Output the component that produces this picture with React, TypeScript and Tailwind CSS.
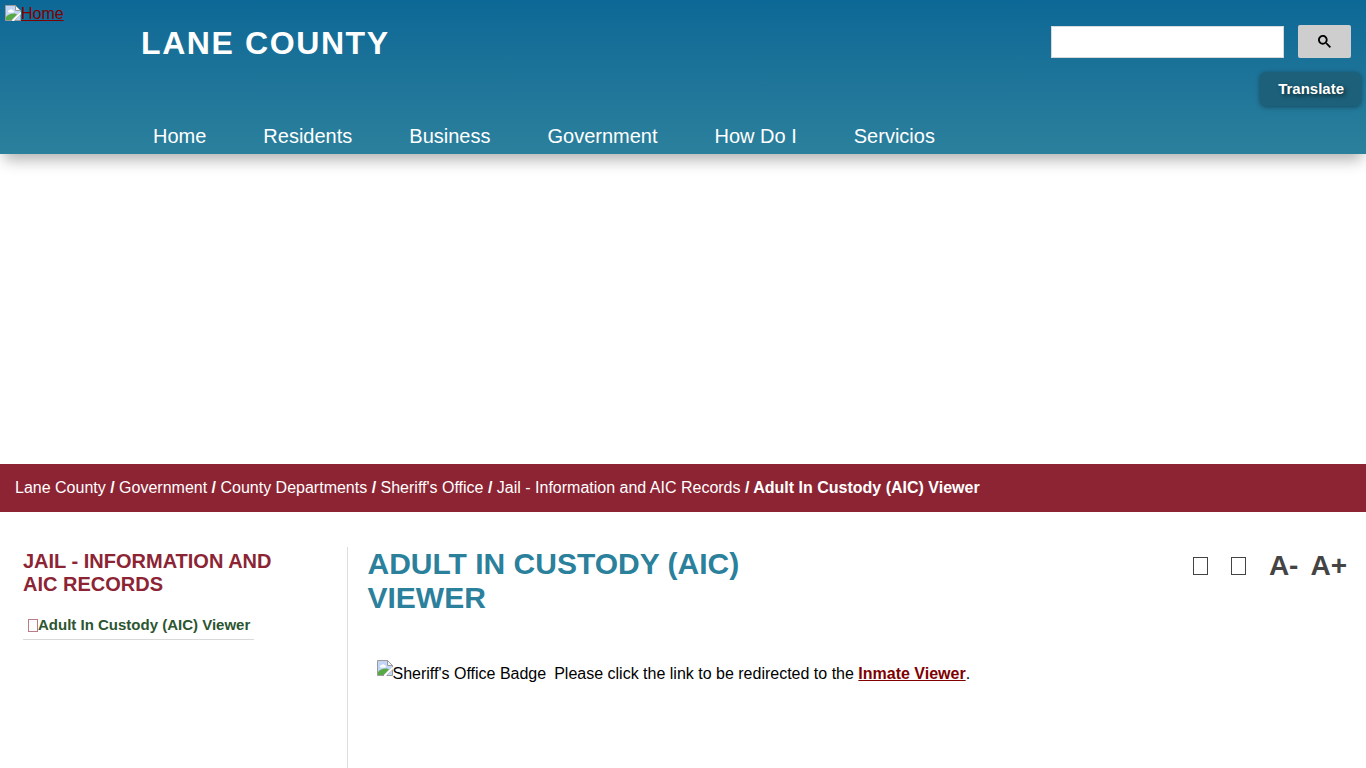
import React from "react";

interface NavLink {
  label: string;
  href: string;
}

const mainMenu: NavLink[] = [
  { label: "Home", href: "/" },
  { label: "Residents", href: "/residents" },
  { label: "Business", href: "/business" },
  { label: "Government", href: "/government" },
  { label: "How Do I", href: "/how-do-i" },
  { label: "Servicios", href: "/servicios" },
];

const breadcrumbs: NavLink[] = [
  { label: "Lane County", href: "/" },
  { label: "Government", href: "/government" },
  { label: "County Departments", href: "/government/departments" },
  { label: "Sheriff's Office", href: "/government/sheriff" },
  { label: "Jail - Information and AIC Records", href: "/government/sheriff/jail" },
];

/**
 * Placeholder for an image that is not available
 */
function MissingImage() {
  return (
    <svg width="16" height="16" viewBox="0 0 16 16" className="shrink-0" aria-hidden="true">
      <path d="M0.5 0.5H10.5L15.5 5.5V7L7 15.5H0.5Z" fill="#c3d6f5" stroke="#9b9b9b" />
      <path d="M10.5 0.5V5.5H15.5Z" fill="#f4f4f4" stroke="#9b9b9b" />
      <path d="M3 6.500a1.500 1.500 0 0 1 1.500-1.500 2 2 0 0 1 3.500 0.500 1 1 0 0 1 0 2H4a1 1 0 0 1-1-1Z" fill="#fff" />
      <path d="M1 15V12C3 9.500 6 8 10 8.500L12 9.500L6.500 15Z" fill="#58a846" />
      <path d="M15.500 9.500V15.500H9.500Z" fill="#c3d6f5" stroke="#9b9b9b" strokeWidth="1" />
      <path d="M7.500 16L16 7.500" stroke="#fff" strokeWidth="2" />
    </svg>
  );
}

/**
 * Site header with logo, search, translate and main menu
 */
function Header() {
  return (
    <header className="relative flex flex-col bg-linear-to-b from-[#0c6896] to-[#2b809c] shadow-[0_10px_14px_-4px_rgba(0,0,0,0.3)]">
      <div className="flex items-start">
        <div className="w-[141px] shrink-0 pt-[5px] pl-[5px]">
          <a href="/" className="flex h-[18px] items-start leading-[18px] text-[#800000] underline">
            <MissingImage />
            Home
          </a>
        </div>
        <div className="grow pt-6 text-[32px] leading-[38px] font-bold tracking-wider text-white">
          LANE COUNTY
        </div>
        <div className="flex flex-col items-end pt-[25px]">
          <form className="mr-[15px] flex items-end gap-[14px]" role="search" onSubmit={(e) => e.preventDefault()}>
            <input
              type="text"
              aria-label="Search"
              className="h-8 w-[233px] border border-[#d9d9d9] bg-white px-2 outline-none"
            />
            <button
              type="submit"
              aria-label="Submit search"
              className="flex h-[33px] w-[53px] items-center justify-center rounded-xs bg-[#cecece]"
            >
              <svg width="13" height="13" viewBox="0 0 13 13" aria-hidden="true">
                <path
                  d="m4.8495 7.8226c0.82666 0 1.5262-0.29146 2.0985-0.87438 0.57232-0.58292 0.86378-1.2877 0.87438-2.1144 0.010599-0.82666-0.28086-1.5262-0.87438-2.0985-0.59352-0.57232-1.293-0.86378-2.0985-0.87438-0.8055-0.010599-1.5103 0.28086-2.1144 0.87438-0.60414 0.59352-0.8956 1.293-0.87438 2.0985 0.021197 0.8055 0.31266 1.5103 0.87438 2.1144 0.56172 0.60414 1.2665 0.8956 2.1144 0.87438zm4.4695 0.2115 3.681 3.6819-1.259 1.284-3.6817-3.7 0.0019784-0.69479-0.090043-0.098846c-0.87973 0.76087-1.92 1.1413-3.1207 1.1413-1.3553 0-2.5025-0.46363-3.4417-1.3909s-1.4088-2.0686-1.4088-3.4239c0-1.3553 0.4696-2.4966 1.4088-3.4239 0.9392-0.92727 2.0864-1.3969 3.4417-1.4088 1.3553-0.011889 2.4906 0.45771 3.406 1.4088 0.9154 0.95107 1.379 2.0924 1.3909 3.4239 0 1.2126-0.38043 2.2588-1.1413 3.1385l0.098834 0.090049z"
                  fill="#000"
                />
              </svg>
            </button>
          </form>
          <button
            type="button"
            className="mt-[14px] mr-[5px] h-[34px] rounded-md bg-[#1d6079] pr-[17px] pl-[18px] text-[15px] font-bold text-white shadow-[0_1px_5px_rgba(0,0,0,0.4)] text-shadow-[2px_2px_4px_rgba(0,0,0,0.6)]"
          >
            Translate
          </button>
        </div>
      </div>
      <nav aria-label="Main menu" className="pt-[18px] pb-1.5 pl-[153px]">
        <ul className="flex gap-[57px] text-xl leading-6 text-white">
          {mainMenu.map((item) => (
            <li key={item.label}>
              <a href={item.href}>{item.label}</a>
            </li>
          ))}
        </ul>
      </nav>
    </header>
  );
}

/**
 * Breadcrumb bar
 */
function Breadcrumbs() {
  return (
    <nav aria-label="Breadcrumb" className="bg-[#8c2434] px-[15px] py-3 text-base font-bold text-white">
      {breadcrumbs.map((crumb) => (
        <React.Fragment key={crumb.label}>
          <a href={crumb.href} className="font-normal">
            {crumb.label}
          </a>
          {" / "}
        </React.Fragment>
      ))}
      <span aria-current="page">Adult In Custody (AIC) Viewer</span>
    </nav>
  );
}

/**
 * Section menu on the left
 */
function Sidebar() {
  return (
    <aside className="ml-1.5 w-1/4 shrink-0 border-r border-[#dddddd] pt-[3px] pr-12 pl-[17px]">
      <h2 className="text-xl leading-[23px] font-bold text-[#8c2434]">
        JAIL - INFORMATION AND AIC RECORDS
      </h2>
      <ul className="mt-[17px]">
        <li className="inline-block border-b border-[#d9d9d9] pr-1 pb-0.5 pl-[5px]">
          <a
            href="/government/sheriff/jail/viewer"
            className="flex items-center text-[15px] leading-6 font-bold text-[#2c5530]"
          >
            <span className="h-[13px] w-[10px] border border-[#8c2434]/60" aria-hidden="true" />
            Adult In Custody (AIC) Viewer
          </a>
        </li>
      </ul>
    </aside>
  );
}

export default function App() {
  return (
    <div className="flex min-h-screen flex-col bg-white font-['Liberation_Sans',Arial,sans-serif] text-base text-black">
      <Header />
      {/* Banner area */}
      <div className="h-[310px]" />
      <Breadcrumbs />
      <div className="mt-[35px] flex grow">
        <Sidebar />
        <main className="grow pr-[19px] pl-5">
          <div className="flex items-start justify-between">
            <h1 className="w-1/2 text-[30px] leading-[34px] font-bold text-[#2b809c]">
              ADULT IN CUSTODY (AIC) VIEWER
            </h1>
            <div className="flex items-center pt-0.5 text-[28px] leading-[34px] font-bold text-[#444444]">
              <button type="button" aria-label="Print" className="mr-[23px] h-[18px] w-[15px] border border-[#444444]" />
              <button type="button" aria-label="Share" className="mr-[23px] h-[18px] w-[15px] border border-[#444444]" />
              <button type="button" aria-label="Decrease text size" className="mr-3">
                A-
              </button>
              <button type="button" aria-label="Increase text size">
                A+
              </button>
            </div>
          </div>
          <p className="mt-[45px] flex items-start pl-[9px]">
            <MissingImage />
            <span className="pt-0.5 pr-2">Sheriff's Office Badge</span>
            <span className="pt-0.5">
              Please click the link to be redirected to the{" "}
              <a href="/inmate-viewer" className="font-bold text-[#800000] underline">
                Inmate Viewer
              </a>
              .
            </span>
          </p>
        </main>
      </div>
    </div>
  );
}
